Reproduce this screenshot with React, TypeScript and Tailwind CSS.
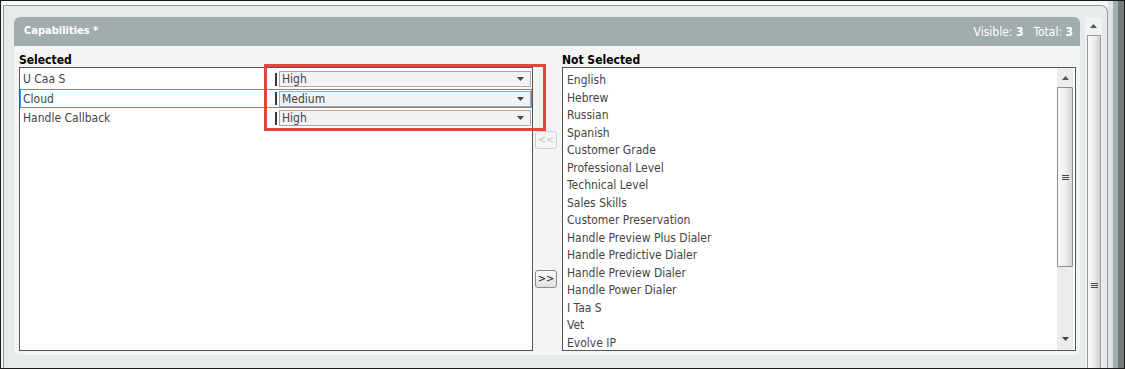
const selected = [
  { name: 'U Caa S', level: 'High', row: 'h-[20px]' },
  { name: 'Cloud', level: 'Medium', row: 'h-[19px] shadow-[inset_0_0_0_1px_#3399ff]' },
  { name: 'Handle Callback', level: 'High', row: 'h-[20px]' },
];

const notSelected = [
  'English',
  'Hebrew',
  'Russian',
  'Spanish',
  'Customer Grade',
  'Professional Level',
  'Technical Level',
  'Sales Skills',
  'Customer Preservation',
  'Handle Preview Plus Dialer',
  'Handle Predictive Dialer',
  'Handle Preview Dialer',
  'Handle Power Dialer',
  'I Taa S',
  'Vet',
  'Evolve IP',
];

function Arrow({ up }: { up?: boolean }) {
  return (
    <svg width="7" height="4" viewBox="0 0 7 4" className="block">
      {up ? <path d="M0 4 L3.5 0 L7 4 Z" fill="#555" /> : <path d="M0 0 L7 0 L3.5 4 Z" fill="#444" />}
    </svg>
  );
}

function Grip() {
  return (
    <div className="flex flex-col gap-[1px]">
      <div className="w-[7px] h-[1px] bg-[#444]" />
      <div className="w-[7px] h-[1px] bg-[#444]" />
      <div className="w-[7px] h-[1px] bg-[#444]" />
    </div>
  );
}

function Dropdown({ value }: { value: string }) {
  return (
    <div className="flex items-center">
      <div className="w-[2px] h-[13px] bg-[#3a3a3a]" />
      <div className="ml-[2px] w-[252px] h-[16px] border border-[#a9a9a9] bg-[#f3f3f3] flex items-center justify-between pl-[2px] pr-[6px] text-[#444] leading-[14px]">
        <span>{value}</span>
        <Arrow />
      </div>
    </div>
  );
}

export default function App() {
  return (
    <div className="w-[1125px] h-[369px] border border-[#1a1a1a] bg-[#f6f7f7] flex overflow-hidden font-['DejaVu_Sans_Condensed','Liberation_Sans',sans-serif] text-[12px]">
      {/* frame */}
      <div className="ml-[2px] mt-[4px] w-[1105px] border-l border-t border-r border-[#9a9a9a] rounded-tr-[7px] bg-[#e6eaea] flex items-start pl-[10px] pt-[11px]">
        {/* panel */}
        <div className="w-[1066px] h-[338px] flex flex-col relative">
          <div className="h-[29px] bg-[#a3acac] rounded-t-[6px] flex items-center justify-between pl-[10px] pr-[7px] text-white">
            <span className="font-bold text-[11px]">Capabilities *</span>
            <span>
              Visible: <b>3</b>
              <span className="ml-[10px]">Total: <b>3</b></span>
            </span>
          </div>
          <div className="flex-1 bg-[#f4f4f4] rounded-b-[6px] pl-[5px] pt-[6px] grid grid-cols-[514px_29px_514px] grid-rows-[15px_284px]">
            <div className="font-bold text-black leading-[14px] pt-[1px]">Selected</div>
            <div />
            <div className="font-bold text-black leading-[14px] pt-[1px]">Not Selected</div>

            {/* selected list */}
            <div className="border border-[#555] bg-white pt-[1px]">
              {selected.map((s) => (
                <div key={s.name} className={`${s.row} flex items-center`}>
                  <div className="w-[255px] pl-[3px] text-[#444]">{s.name}</div>
                  <Dropdown value={s.level} />
                </div>
              ))}
            </div>

            {/* move buttons */}
            <div className="flex flex-col pl-[2px] pt-[64px]">
              <button className="w-[22px] h-[18px] border border-[#cfcfcf] rounded-[3px] bg-[#f4f4f4] text-[#c4c4c4] text-[11px] leading-[14px]">
                &lt;&lt;
              </button>
              <button className="mt-[121px] w-[22px] h-[18px] border border-[#8a8a8a] rounded-[3px] bg-gradient-to-b from-[#fbfbfb] to-[#e2e2e2] text-[#222] text-[11px] leading-[14px]">
                &gt;&gt;
              </button>
            </div>

            {/* not selected list */}
            <div className="border border-[#555] bg-white flex overflow-hidden">
              <div className="flex-1 pl-[4px] pt-[4px] text-[#444]">
                {notSelected.map((n) => (
                  <div key={n} className="h-[17.5px] leading-[17.5px] whitespace-nowrap">
                    {n}
                  </div>
                ))}
              </div>
              <div className="w-[16px] mr-[2px] bg-[#ececec] flex flex-col">
                <div className="h-[19px] flex items-center justify-center">
                  <Arrow up />
                </div>
                <div className="h-[180px] border border-[#8e8e8e] rounded-[1px] bg-gradient-to-r from-[#fafafa] via-[#f0f0f0] to-[#d4d4d4] flex items-center justify-center">
                  <Grip />
                </div>
                <div className="flex-1 flex items-end justify-center pb-[9px]">
                  <Arrow />
                </div>
              </div>
            </div>
          </div>

          {/* red annotation box */}
          <div className="absolute left-[250px] top-[47px] w-[282px] h-[67px] border-[3px] border-[#e5443b]" />
        </div>

        {/* outer scrollbar */}
        <div className="ml-[5px] w-[17px] self-stretch bg-[#f1f2f2] flex flex-col">
          <div className="h-[18px] flex items-center justify-center">
            <Arrow up />
          </div>
          <div className="ml-[2px] w-[14px] flex-1 border-l border-r border-t border-[#9a9a9a] bg-gradient-to-r from-[#fafafa] via-[#eeeeee] to-[#cfcfcf] flex flex-col items-center pt-[247px]">
            <Grip />
          </div>
        </div>
      </div>

      {/* right edge strip */}
      <div className="flex-1 flex">
        <div className="w-[5px] bg-[#dfe4e4]" />
        <div className="w-[5px] bg-[#a4adad]" />
        <div className="flex-1 bg-[#6e7c7c]" />
      </div>
    </div>
  );
}
